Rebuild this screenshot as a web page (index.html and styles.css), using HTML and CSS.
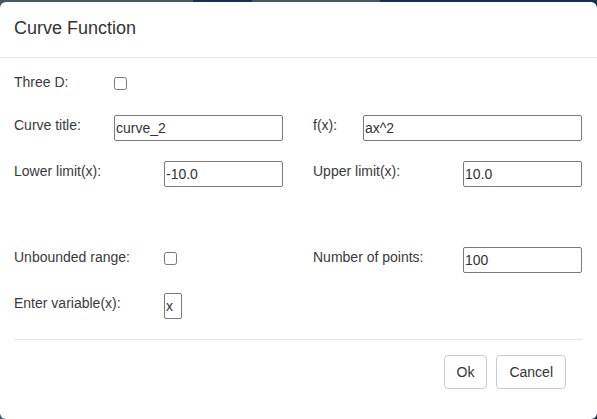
FILE: index.html
```html
<!DOCTYPE html>
<html>
<head>
<meta charset="utf-8">
<link rel="stylesheet" href="styles.css">
</head>
<body>
<div class="dialog">
  <div class="header">
    <h1 class="title">Curve Function</h1>
  </div>
  <div class="content">
    <div class="row">
      <div class="cell">
        <label class="label w100">Three D:</label>
        <input type="checkbox" class="check check-top">
      </div>
    </div>
    <div class="row m17">
      <div class="cell">
        <label class="label w100">Curve title:</label>
        <input type="text" class="field w169" value="curve_2">
      </div>
      <div class="cell">
        <label class="label w50">f(x):</label>
        <input type="text" class="field w219" value="ax^2">
      </div>
    </div>
    <div class="row m20">
      <div class="cell">
        <label class="label w150">Lower limit(x):</label>
        <input type="text" class="field w119" value="-10.0">
      </div>
      <div class="cell">
        <label class="label w150">Upper limit(x):</label>
        <input type="text" class="field w119" value="10.0">
      </div>
    </div>
    <div class="row m60">
      <div class="cell">
        <label class="label w150">Unbounded range:</label>
        <input type="checkbox" class="check check-mid">
      </div>
      <div class="cell">
        <label class="label w150">Number of points:</label>
        <input type="text" class="field w119" value="100">
      </div>
    </div>
    <div class="row m20">
      <div class="cell">
        <label class="label w150">Enter variable(x):</label>
        <input type="text" class="field w18" value="x">
      </div>
    </div>
  </div>
  <div class="footer">
    <button class="btn">Ok</button>
    <button class="btn">Cancel</button>
  </div>
</div>
</body>
</html>
```

FILE: styles.css
```css
html, body {
  margin: 0;
  padding: 0;
}
body {
  width: 597px;
  height: 419px;
  overflow: hidden;
  background: linear-gradient(to right, #485860 0, #485860 193px, #17314d 193px, #17314d 252px, #485860 252px, #485860 380px, #17314d 380px, #17314d 597px);
  font-family: "Liberation Sans", Arial, sans-serif;
  color: #333;
}
.dialog {
  margin-top: 2px;
  height: 417px;
  background: #fff;
  border-radius: 6px;
  overflow: hidden;
}
.header {
  padding: 16px 14px 18px 14px;
  border-bottom: 1px solid #e5e5e5;
}
.title {
  margin: 0;
  font-size: 18px;
  line-height: 21px;
  font-weight: normal;
  color: #333;
}
.content {
  padding: 14px 15px 0 14px;
}
.row {
  display: grid;
  grid-template-columns: 299px 269px;
  height: 26px;
}
.m17 { margin-top: 17px; }
.m20 { margin-top: 20px; }
.m60 { margin-top: 60px; }
.cell {
  display: flex;
  align-items: flex-start;
}
.label {
  flex: none;
  font-size: 14px;
  line-height: 16px;
  padding-top: 2px;
  color: #3a3a3a;
}
.w50 { width: 50px; }
.w100 { width: 100px; }
.w150 { width: 150px; }
.field {
  box-sizing: border-box;
  height: 26px;
  margin: 0;
  padding: 1px 1px;
  border: 1px solid #7a7a7a;
  border-radius: 2px;
  font-family: "Liberation Sans", Arial, sans-serif;
  font-size: 14px;
  color: #333;
  background: #fff;
  outline: none;
}
.w18 { width: 18px; height: 26px; }
.w119 { width: 119px; }
.w169 { width: 169px; }
.w219 { width: 219px; }
.check {
  width: 13px;
  height: 13px;
  margin: 0;
}
.check-top { margin-top: 5px; }
.check-mid { margin-top: 5px; }
.footer {
  margin: 20px 15px 0 14px;
  border-top: 1px solid #e5e5e5;
  padding: 15px 16px 0 0;
  display: flex;
  justify-content: flex-end;
  gap: 9px;
}
.btn {
  font-family: "Liberation Sans", Arial, sans-serif;
  font-size: 14px;
  line-height: 20px;
  padding: 6px 12px;
  border: 1px solid #ccc;
  border-radius: 4px;
  background: #fff;
  color: #333;
  margin: 0;
}
```
